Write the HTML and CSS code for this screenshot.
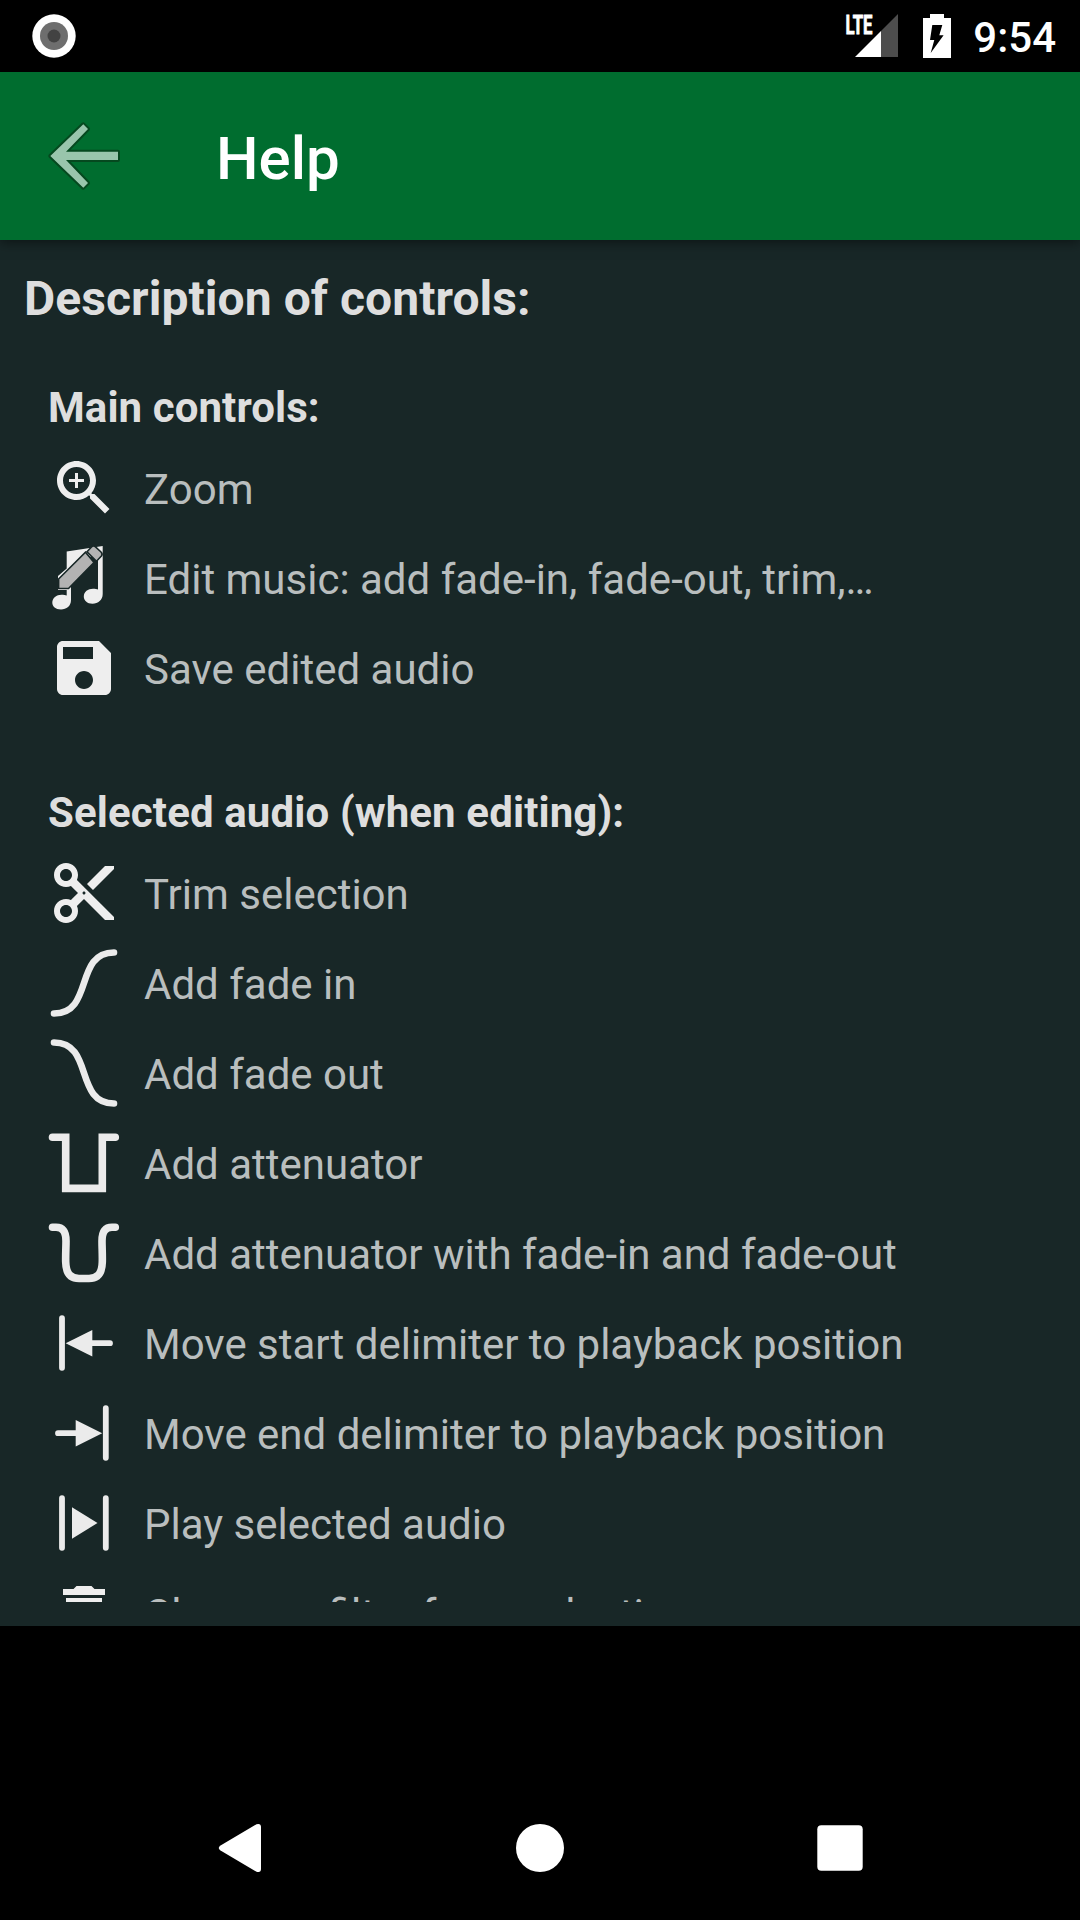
FILE: index.html
```
<!DOCTYPE html>
<html lang="en">
<head>
    <meta charset="UTF-8">
    <meta name="viewport" content="width=device-width, initial-scale=1.0">
    <title>Help</title>
    <link rel="stylesheet" href="styles.css">
</head>
<body>
    <div class="status-bar">
        <svg class="camera" viewBox="0 0 44 44">
            <circle cx="22" cy="22" r="21.7" fill="#fff"/>
            <circle cx="22" cy="22" r="14" fill="#6e6e6e"/>
            <circle cx="22" cy="22" r="6.5" fill="#424242"/>
        </svg>
        <div class="status-right">
            <svg class="signal" viewBox="0 0 54 44">
                <path d="M53 0V43H36V17z" fill="#4d4d4d"/>
                <path d="M36 17V43H10z" fill="#fff"/>
                <text x="0.500" y="19.500" textLength="27" lengthAdjust="spacingAndGlyphs">LTE</text>
            </svg>
            <svg class="battery" viewBox="0 0 28 44">
                <path d="M7 0H21V4H28V44H0V4H7z" fill="#fff"/>
                <path d="M9.300 11H19.300L16.300 21.300H20.600L7.700 39L11.300 26H7z" fill="#000"/>
            </svg>
            <span class="clock">9:54</span>
        </div>
    </div>

    <header class="app-bar">
        <svg class="back" viewBox="0 0 80 80">
            <path class="back-edge" d="M6.300 40L39.300 8.300L44 13L22 35.700H74V43.900H22L44 67L39.300 71.700z"/>
            <path class="back-fill" d="M6.300 40L39.300 8.300L44 13L22 35.700H74V43.900H22L44 67L39.300 71.700z"/>
        </svg>
        <h1>Help</h1>
    </header>

    <main class="content">
        <div class="scroll">
            <h2>Description of controls:</h2>

            <section>
                <h3>Main controls:</h3>
                <ul>
                    <li>
                        <svg viewBox="0 0 24 24"><path d="M15.500 14h-.79l-.28-.27C15.410 12.590 16 11.110 16 9.500 16 5.910 13.090 3 9.500 3S3 5.910 3 9.500 5.910 16 9.500 16c1.610 0 3.090-.59 4.230-1.570l.27.28v.79l5 4.990L20.490 19l-4.990-5zm-6 0C7.010 14 5 11.990 5 9.500S7.010 5 9.500 5 14 7.010 14 9.500 11.990 14 9.500 14zM12 10h-2v2H9v-2H7V9h2V7h1v2h2v1z"/></svg>
                        <span>Zoom</span>
                    </li>
                    <li>
                        <svg viewBox="0 0 72 72">
                            <path d="M18.700 9.600L54.700 4V52C54.700 58 50 61.700 44.500 61.700C39 61.700 35.800 58.500 35.800 54.500C35.800 49.500 40 46.700 45 46.700C47 46.700 49 47 50 47.500V14L38 15L23 30V58C23 64 18.500 67.500 13 67.500C7.500 67.500 4.300 64.500 4.300 60.500C4.300 56 8.500 52.700 13.500 52.700C15.500 52.700 17.500 53 18.700 53.500V48H10V34L18.700 26.500z"/>
                            <path class="pencil" d="M10.600 46.500V37L37.500 10.300L46 20.500L20.500 46.500z"/>
                            <path class="pencil" d="M39 9.800L43.500 5C44.800 3.700 46 3.700 47.200 4.700L53 10C54.400 11.400 54.400 12.800 53.400 14L48.500 19.200z"/>
                            <path d="M10 47.500V36.700L9 37V48.500z" fill="#182727"/>
                        </svg>
                        <span>Edit music: add fade-in, fade-out, trim,…</span>
                    </li>
                    <li>
                        <svg viewBox="0 0 24 24"><path d="M17 3H5c-1.110 0-2 .9-2 2v14c0 1.100.89 2 2 2h14c1.100 0 2-.9 2-2V7l-4-4zm-5 16c-1.660 0-3-1.340-3-3s1.340-3 3-3 3 1.340 3 3-1.340 3-3 3zm3-10H5V5h10v4z"/></svg>
                        <span>Save edited audio</span>
                    </li>
                </ul>
            </section>

            <section>
                <h3 class="wide">Selected audio (when editing):</h3>
                <ul>
                    <li>
                        <svg viewBox="0 0 24 24"><path d="M9.640 7.640c.23-.5.36-1.050.36-1.640 0-2.210-1.790-4-4-4S2 3.790 2 6s1.790 4 4 4c.59 0 1.140-.13 1.640-.36L10 12l-2.360 2.360C7.140 14.130 6.590 14 6 14c-2.210 0-4 1.790-4 4s1.790 4 4 4 4-1.790 4-4c0-.59-.13-1.140-.36-1.640L12 14l7 7h3v-1L9.640 7.640zM6 8c-1.100 0-2-.89-2-2s.9-2 2-2 2 .89 2 2-.9 2-2 2zm0 12c-1.100 0-2-.89-2-2s.9-2 2-2 2 .89 2 2-.9 2-2 2zm6-7.500c-.28 0-.5-.22-.5-.5s.22-.5.5-.5.5.22.5.5-.22.5-.5.5zM19 3l-6 6 2 2 7-7V3z"/></svg>
                        <span>Trim selection</span>
                    </li>
                    <li>
                        <svg class="line" viewBox="0 0 72 72"><path d="M6 66.500C46 66.500 26 5.500 66 5.500"/></svg>
                        <span>Add fade in</span>
                    </li>
                    <li>
                        <svg class="line" viewBox="0 0 72 72"><path d="M6 5.500C46 5.500 26 66.500 66 66.500"/></svg>
                        <span>Add fade out</span>
                    </li>
                    <li>
                        <svg class="line thick" viewBox="0 0 72 72"><path d="M4.500 10.300H17.700V61.400H54.300V10.300H67.300"/></svg>
                        <span>Add attenuator</span>
                    </li>
                    <li>
                        <svg class="line thick" viewBox="0 0 72 72"><path d="M4.500 10.300H8C15 10.300 18 15 18 24C18 31 17.500 37 17.700 45C18 57 23 61.500 31 61.500H41C49 61.500 54 57 54.300 45C54.500 37 54 31 54 24C54 15 57 10.300 64 10.300H67.300"/></svg>
                        <span>Add attenuator with fade-in and fade-out</span>
                    </li>
                    <li>
                        <svg class="line bars" viewBox="0 0 72 72"><path d="M14 11.200V60.800M40 36.200H62"/><path class="solid" d="M17.700 36.200L44.300 23V49.500z"/></svg>
                        <span>Move start delimiter to playback position</span>
                    </li>
                    <li>
                        <svg class="line bars" viewBox="0 0 72 72"><path d="M57.800 11.200V60.800M10 36.200H32"/><path class="solid" d="M54.200 36.200L27.700 23V49.500z"/></svg>
                        <span>Move end delimiter to playback position</span>
                    </li>
                    <li>
                        <svg class="line bars" viewBox="0 0 72 72"><path d="M14 11.200V60.800M57.800 11.200V60.800"/><path class="solid" d="M49.500 36L24 20.200V51.800z"/></svg>
                        <span>Play selected audio</span>
                    </li>
                    <li>
                        <svg viewBox="0 0 24 24"><path d="M6 19c0 1.100.9 2 2 2h8c1.100 0 2-.9 2-2V7H6v12zM19 4h-3.500l-1-1h-5l-1 1H5v2h14V4z"/></svg>
                        <span>Clear any filter from selection</span>
                    </li>
                </ul>
            </section>
        </div>
    </main>

    <nav class="nav-bar">
        <svg viewBox="0 0 50 50"><path d="M5.500 22.500L41.500 1.200Q46 0 46 4V46Q46 50 41.500 48.700L5.500 27.500Q2 25 5.500 22.500z"/></svg>
        <svg viewBox="0 0 50 50"><circle cx="25" cy="25" r="24"/></svg>
        <svg viewBox="0 0 50 50"><rect x="2.300" y="2.300" width="45.400" height="45.400" rx="4"/></svg>
    </nav>
</body>
</html>
```

FILE: styles.css
```
* {
    box-sizing: border-box;
}

body {
    margin: 0;
    height: 1920px;
    display: flex;
    flex-direction: column;
    background-color: #000;
    color: #b9bebe;
    font-family: Roboto, sans-serif;
    font-size: 42px;
    overflow: hidden;
}

svg {
    display: block;
    flex: none;
}

h1, h2, h3, ul {
    margin: 0;
    padding: 0;
    font-weight: bold;
}

.status-bar {
    height: 72px;
    flex: none;
    display: flex;
    justify-content: space-between;
    align-items: flex-start;
    padding: 14px 24px 0 32px;
}

.camera {
    width: 44px;
    height: 44px;
}

.status-right {
    display: flex;
}

.signal {
    width: 54px;
    height: 44px;
    overflow: visible;
}

.signal text {
    font-size: 25px;
    font-weight: bold;
    fill: #fff;
    stroke: #fff;
    stroke-width: 0.8;
}

.battery {
    width: 28px;
    height: 44px;
    margin: 0 22px 0 24px;
}

.clock {
    color: #fff;
    font-weight: 500;
    line-height: 48px;
}

.app-bar {
    height: 168px;
    flex: none;
    display: flex;
    align-items: center;
    padding-left: 44px;
    background-color: #006d2f;
    box-shadow: 0 2px 12px rgba(0, 0, 0, 0.5);
    z-index: 1;
}

.back {
    width: 80px;
    height: 80px;
}

.back-edge {
    fill: none;
    stroke: #05491f;
    stroke-width: 4;
    stroke-linejoin: round;
}

.back-fill {
    fill: #99c5ac;
}

h1 {
    margin-left: 92px;
    padding-top: 4px;
    color: #fff;
    font-size: 60px;
    font-weight: 500;
}

.content {
    height: 1386px;
    flex: none;
    padding: 24px;
    background-color: #182727;
}

.scroll {
    height: 1338px;
    overflow: hidden;
}

h2 {
    height: 107px;
    line-height: 70px;
    color: #dedede;
    font-size: 48px;
    letter-spacing: 0.06px;
}

section {
    padding-left: 24px;
    margin-bottom: 63px;
}

h3 {
    height: 72px;
    line-height: 74px;
    color: #dedede;
    font-size: 42px;
    letter-spacing: 0.08px;
}

.wide {
    letter-spacing: 0.12px;
}

ul {
    list-style: none;
    font-weight: normal;
}

li {
    height: 90px;
    display: flex;
    align-items: center;
    gap: 24px;
    white-space: nowrap;
}

li span {
    padding-top: 2px;
}

li svg {
    width: 72px;
    height: 72px;
    fill: #eee;
}

.pencil {
    fill: #b3b3b3;
    stroke: #182727;
    stroke-width: 1.6;
}

.line {
    fill: none;
    stroke: #ebebeb;
    stroke-width: 6.6;
    stroke-linecap: round;
}

.thick {
    stroke-width: 7.6;
}

.bars {
    stroke-width: 5.8;
}

.solid {
    fill: #ebebeb;
    stroke: none;
}

.nav-bar {
    margin-top: auto;
    height: 144px;
    display: flex;
    justify-content: center;
    align-items: center;
    gap: 250px;
}

.nav-bar svg {
    width: 50px;
    height: 50px;
    fill: #fff;
}
```
